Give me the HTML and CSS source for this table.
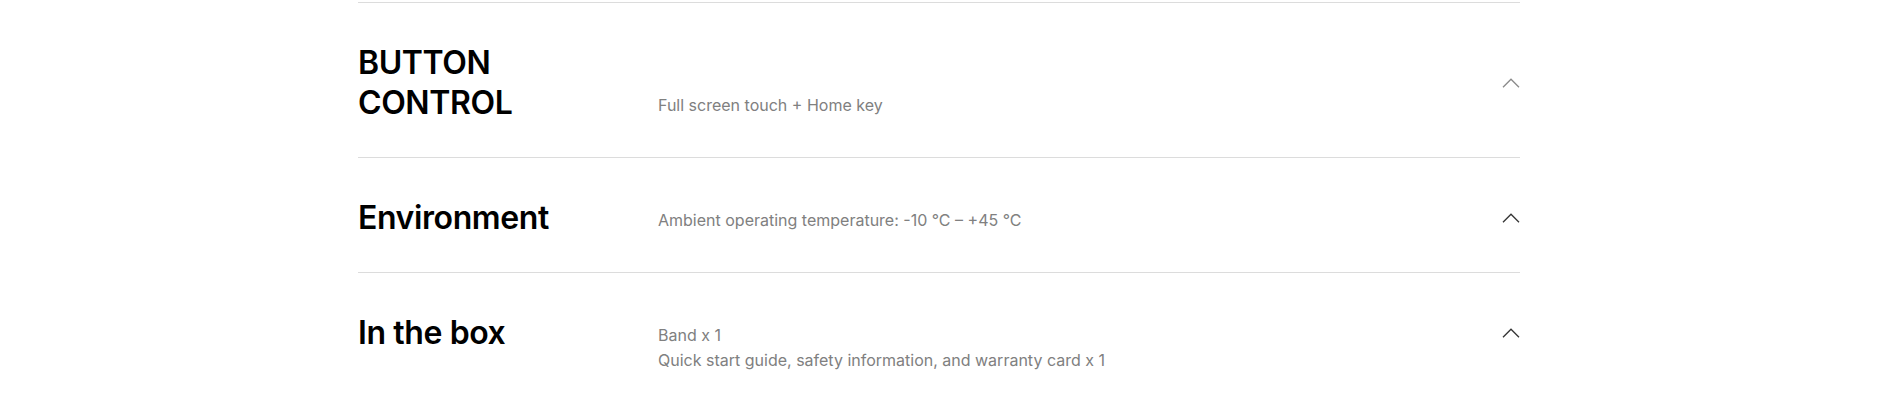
FILE: index.html
```html
<!DOCTYPE html>
<html lang="en">
<head>
<meta charset="utf-8">
<title>Specifications</title>
<link rel="stylesheet" href="styles.css">
</head>
<body>
<main class="page">
  <section class="specs">
    <div class="spec spec--tall">
      <h3 class="spec__title">BUTTON<br>CONTROL</h3>
      <div class="spec__body">
        <p>Full screen touch + Home key</p>
      </div>
      <div class="spec__toggle spec__toggle--muted">
        <svg width="18" height="10" viewBox="0 0 18 10" aria-hidden="true"><path d="M1 9.2 L9 1.2 L17 9.2" fill="none" stroke="currentColor" stroke-width="1.3"/></svg>
      </div>
    </div>
    <div class="spec">
      <h3 class="spec__title">Environment</h3>
      <div class="spec__body">
        <p>Ambient operating temperature: -10 °C – +45 °C</p>
      </div>
      <div class="spec__toggle">
        <svg width="18" height="10" viewBox="0 0 18 10" aria-hidden="true"><path d="M1 9.2 L9 1.2 L17 9.2" fill="none" stroke="currentColor" stroke-width="1.3"/></svg>
      </div>
    </div>
    <div class="spec">
      <h3 class="spec__title">In the box</h3>
      <div class="spec__body">
        <p>Band x 1</p>
        <p>Quick start guide, safety information, and warranty card x 1</p>
      </div>
      <div class="spec__toggle">
        <svg width="18" height="10" viewBox="0 0 18 10" aria-hidden="true"><path d="M1 9.2 L9 1.2 L17 9.2" fill="none" stroke="currentColor" stroke-width="1.3"/></svg>
      </div>
    </div>
  </section>
</main>
</body>
</html>
```

FILE: styles.css
```css
* { box-sizing: border-box; }

html, body {
  margin: 0;
  padding: 0;
  background: #ffffff;
}

body {
  font-family: Inter, "Noto Sans", "Liberation Sans", sans-serif;
  color: #000;
  overflow: hidden;
}

.page {
  padding: 2px 15px 0 0;
}

.specs {
  width: 1162px;
  margin: 0 auto;
}

.spec {
  display: grid;
  grid-template-columns: 300px 1fr 18px;
  align-items: start;
  border-top: 1px solid #dcdcdc;
  padding: 40px 0 34px;
}

.spec__title {
  margin: 0;
  font-size: 32px;
  line-height: 40px;
  font-weight: 600;
  letter-spacing: -0.4px;
  color: #000;
}

.spec__body {
  padding-top: 10px;
  color: #808080;
  font-size: 16px;
  line-height: 25px;
  font-weight: 400;
}

.spec__body p {
  margin: 0;
}

.spec--tall .spec__body {
  padding-top: 50px;
}

.spec__toggle {
  height: 40px;
  display: flex;
  align-items: center;
  justify-content: flex-end;
  color: #333;
}

.spec--tall .spec__toggle {
  height: 80px;
}

.spec__toggle--muted {
  color: #8a8a8a;
}

.spec__toggle svg {
  display: block;
}
```
